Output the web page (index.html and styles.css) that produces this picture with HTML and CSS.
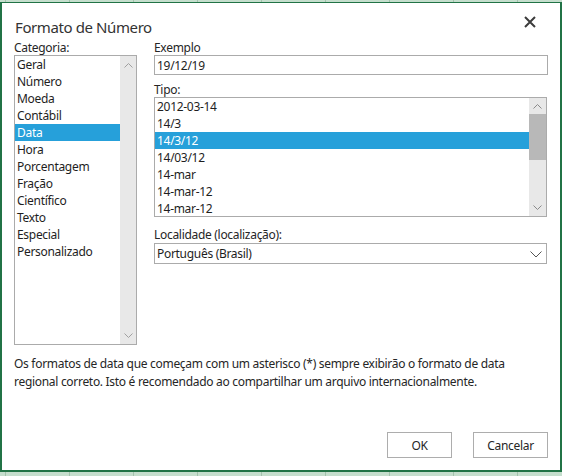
FILE: index.html
```html
<!DOCTYPE html>
<html lang="pt-BR">
<head>
<meta charset="utf-8">
<title>Formato de Número</title>
<link rel="stylesheet" href="styles.css">
</head>
<body>
<div class="dialog">
  <div class="titlebar">
    <span class="title">Formato de Número</span>
    <svg class="close" width="12" height="12" viewBox="0 0 12 12"><path d="M1 1L11 11M11 1L1 11" stroke="#3c3c3c" stroke-width="2"/></svg>
  </div>
  <div class="main">
    <div class="col-left">
      <div class="label">Categoria:</div>
      <div class="listbox cat">
        <ul class="items">
          <li>Geral</li>
          <li>Número</li>
          <li>Moeda</li>
          <li>Contábil</li>
          <li class="sel">Data</li>
          <li>Hora</li>
          <li>Porcentagem</li>
          <li>Fração</li>
          <li>Científico</li>
          <li>Texto</li>
          <li>Especial</li>
          <li>Personalizado</li>
        </ul>
        <div class="scrollbar">
          <svg class="arrow" width="9" height="5" viewBox="0 0 9 5"><path d="M0.5 4.5L4.5 0.5L8.5 4.5" fill="none" stroke="#a0a0a0" stroke-width="1"/></svg>
          <div class="track"></div>
          <svg class="arrow" width="9" height="5" viewBox="0 0 9 5"><path d="M0.5 0.5L4.5 4.5L8.5 0.5" fill="none" stroke="#a0a0a0" stroke-width="1"/></svg>
        </div>
      </div>
    </div>
    <div class="col-right">
      <div class="label">Exemplo</div>
      <div class="field">19/12/19</div>
      <div class="label tipo">Tipo:</div>
      <div class="listbox tipo-list">
        <ul class="items">
          <li>2012-03-14</li>
          <li>14/3</li>
          <li class="sel">14/3/12</li>
          <li>14/03/12</li>
          <li>14-mar</li>
          <li>14-mar-12</li>
          <li>14-mar-12</li>
        </ul>
        <div class="scrollbar">
          <svg class="arrow" width="9" height="5" viewBox="0 0 9 5"><path d="M0.5 4.5L4.5 0.5L8.5 4.5" fill="none" stroke="#8a8a8a" stroke-width="1"/></svg>
          <div class="track"><div class="thumb"></div></div>
          <svg class="arrow" width="9" height="5" viewBox="0 0 9 5"><path d="M0.5 0.5L4.5 4.5L8.5 0.5" fill="none" stroke="#8a8a8a" stroke-width="1"/></svg>
        </div>
      </div>
      <div class="label loc">Localidade (localização):</div>
      <div class="select">
        <span>Português (Brasil)</span>
        <svg width="12" height="7" viewBox="0 0 12 7"><path d="M0.5 0.5L6 6L11.5 0.5" fill="none" stroke="#555" stroke-width="1"/></svg>
      </div>
    </div>
  </div>
  <p class="note">Os formatos de data que começam com um asterisco (*) sempre exibirão o formato de data<br>regional correto. Isto é recomendado ao compartilhar um arquivo internacionalmente.</p>
  <div class="buttons">
    <button class="btn ok">OK</button>
    <button class="btn cancel">Cancelar</button>
  </div>
</div>
</body>
</html>
```
FILE: styles.css
```css
html, body {
  margin: 0;
  padding: 0;
}
body {
  width: 562px;
  height: 476px;
  overflow: hidden;
  background-color: #c5decd;
  background-image: repeating-linear-gradient(to right, transparent 0, transparent 5px, #a3c2ad 5px, #a3c2ad 6px, transparent 6px, transparent 64px);
  font-family: "Noto Sans", "Open Sans", sans-serif;
  font-size: 12px;
  letter-spacing: -0.3px;
  color: #1e1e1e;
}
.dialog {
  box-sizing: border-box;
  margin-top: 2px;
  width: 562px;
  height: 470px;
  background: #fff;
  border: 2px solid #217346;
  border-top-width: 1px;
  padding: 0 12px 12px 12px;
  display: flex;
  flex-direction: column;
}
.titlebar {
  height: 37px;
  display: flex;
  justify-content: space-between;
  align-items: flex-start;
}
.title {
  padding-top: 14px;
  padding-left: 1px;
  font-size: 15px;
  letter-spacing: -0.4px;
  line-height: 21px;
  color: #333;
}
.close {
  margin-top: 13px;
  margin-right: 12px;
}
.main {
  display: grid;
  grid-template-columns: 123px 1fr;
  column-gap: 17px;
}
.label {
  line-height: 15px;
  height: 15px;
  color: #262626;
  white-space: nowrap;
}
.listbox {
  box-sizing: border-box;
  border: 1px solid #ababab;
  display: flex;
  background: #fff;
}
.listbox.cat {
  height: 290px;
}
.items {
  list-style: none;
  margin: 0;
  padding: 0;
  flex: 1;
  overflow: hidden;
}
.items li {
  height: 17px;
  line-height: 17px;
  padding-left: 2px;
  white-space: nowrap;
}
.items li.sel {
  background: #26a0da;
  color: #fff;
}
.scrollbar {
  width: 16px;
  background: #e8e8e8;
  display: flex;
  flex-direction: column;
  align-items: center;
}
.cat .scrollbar .arrow:first-child {
  margin-top: 7px;
}
.cat .scrollbar .arrow:last-child {
  margin-bottom: 6px;
}
.scrollbar .track {
  flex: 1;
  align-self: stretch;
}
.field {
  box-sizing: border-box;
  height: 20px;
  border: 1px solid #ababab;
  padding: 2px 0 0 2px;
  line-height: 16px;
}
.label.tipo {
  margin-top: 7px;
}
.tipo-list {
  height: 120px;
  margin-right: 1px;
}
.tipo-list .scrollbar {
  width: 17px;
}
.tipo-list .scrollbar .arrow:first-child {
  margin-top: 6px;
  margin-bottom: 4px;
}
.tipo-list .scrollbar .arrow:last-child {
  margin-top: 5px;
  margin-bottom: 6px;
}
.tipo-list .track {
  padding-top: 1px;
}
.thumb {
  height: 46px;
  background: #b8b8b8;
}
.label.loc {
  margin-top: 11px;
  height: 14px;
  line-height: 14px;
}
.select {
  box-sizing: border-box;
  height: 21px;
  margin-top: 1px;
  margin-right: 1px;
  border: 1px solid #ababab;
  display: flex;
  align-items: center;
  justify-content: space-between;
  padding: 0 4px 0 2px;
  line-height: 17px;
}
.select svg {
  margin-top: 1px;
}
.note {
  margin: 10px 0 0 0;
  line-height: 18px;
  color: #262626;
  white-space: nowrap;
}
.buttons {
  margin-top: auto;
  display: flex;
  justify-content: flex-end;
  gap: 21px;
}
.btn {
  box-sizing: border-box;
  height: 26px;
  border: 1px solid #adadad;
  background: #fff;
  font-family: inherit;
  font-size: 12px;
  letter-spacing: -0.3px;
  color: #262626;
  padding: 0;
}
.btn.ok {
  width: 65px;
}
.btn.cancel {
  width: 75px;
}
```
